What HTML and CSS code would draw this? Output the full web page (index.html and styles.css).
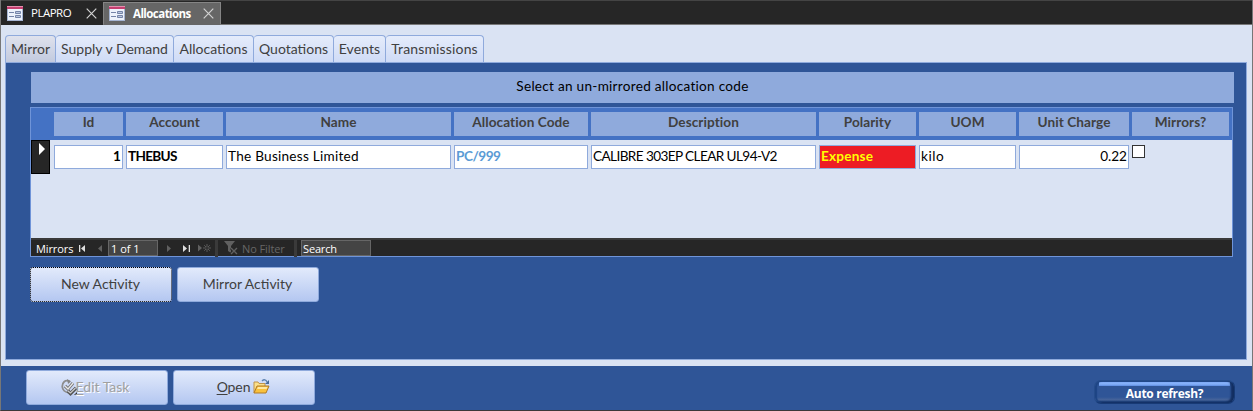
FILE: index.html
```html
<!DOCTYPE html>
<html lang="en">
<head>
<meta charset="utf-8">
<title>Allocations</title>
<link rel="stylesheet" href="styles.css">
</head>
<body>
<svg class="defs" width="0" height="0">
  <symbol id="form" viewBox="0 0 16 15">
    <path d="M0 0h16v15H0z" fill="#a6b5d3"/><path d="M0 0h16v3H0z" fill="#c63f70"/><path d="M0 0h16v1H0z" fill="#e58eae"/>
    <path d="M1 3h14v11H1z" fill="#edf2fb"/><path d="M2 6h5v1H2zM2 10h5v1H2z" fill="#7584a8"/>
    <path d="M8.500 5.500h5v2h-5zM8.500 9.500h5v2h-5z" fill="#b9c6df" stroke="#7584a8"/>
  </symbol>
  <symbol id="close" viewBox="0 0 11 11"><path d="M.7.700l9.600 9.600M10.300.7L.7 10.300" stroke="#d2d2d2" stroke-width="1.200"/></symbol>
</svg>
<div class="window">
  <header class="doc-tabs">
    <div class="doc"><svg class="form-icon"><use href="#form"/></svg><span class="t-plapro">PLAPRO</span><svg class="close"><use href="#close"/></svg></div>
    <div class="doc current"><svg class="form-icon"><use href="#form"/></svg><span class="t-alloc">Allocations</span><svg class="close"><use href="#close"/></svg></div>
    <div class="doc-rest"></div>
  </header>
  <main class="page">
    <nav class="tabs">
      <span class="tab w1 on">Mirror</span><span class="tab w2">Supply v Demand</span><span class="tab w3">Allocations</span><span class="tab w4">Quotations</span><span class="tab w5">Events</span><span class="tab w6">Transmissions</span>
    </nav>
    <section class="panel">
      <div class="banner"><span>Select an un-mirrored allocation code</span></div>
      <div class="subform">
        <div class="cols head"><i></i><b>Id</b><b>Account</b><b>Name</b><b>Allocation Code</b><b>Description</b><b>Polarity</b><b>UOM</b><b>Unit Charge</b><b>Mirrors?</b></div>
        <div class="cols row">
          <div class="selector"><svg width="6" height="12" viewBox="0 0 6 12"><path d="M0 0l6 6-6 6z" fill="#fff"/></svg></div>
          <span class="cell right bold">1</span><span class="cell bold acct">THEBUS</span><span class="cell name">The Business Limited</span><span class="cell bold code">PC/999</span><span class="cell desc">CALIBRE 303EP CLEAR UL94-V2</span><span class="cell bold expense">Expense</span><span class="cell uom">kilo</span><span class="cell right">0.22</span><span class="check"></span>
        </div>
        <div class="blank"></div>
        <div class="nav">
          <span class="nav-title">Mirrors</span>
          <svg class="first" width="7" height="7" viewBox="0 0 7 7"><path d="M0 0h1.300v7H0zM6 0v7L2 3.500z" fill="#e0e0e0"/></svg>
          <svg class="prev" width="5" height="7" viewBox="0 0 5 7"><path d="M4 0v7L0 3.500z" fill="#606060"/></svg>
          <span class="pos">1 of 1</span>
          <svg class="next" width="5" height="7" viewBox="0 0 5 7"><path d="M0 0v7l4-3.500z" fill="#606060"/></svg>
          <svg class="last" width="7" height="7" viewBox="0 0 7 7"><path d="M5.700 0H7v7H5.700zM0 0v7l4-3.500z" fill="#e0e0e0"/></svg>
          <svg class="new" width="13" height="8" viewBox="0 0 13 8"><path d="M0 .5v7L4 4z" fill="#606060"/><path d="M9 0v8M5 4h8M6.200 1.200l5.600 5.600M11.800 1.200L6.200 6.800" stroke="#606060" stroke-width=".9"/><circle cx="9" cy="4" r="1" fill="#262626"/></svg>
          <span class="filter"><svg width="15" height="14" viewBox="0 0 15 14"><path d="M0 0h11L7 5v7l-3-2V5z" fill="#606060"/><path d="M7 7l6 6M13 7l-6 6" stroke="#262626" stroke-width="3"/><path d="M7 7l6 6M13 7l-6 6" stroke="#606060" stroke-width="1.400"/></svg>No Filter</span>
          <span class="search">Search</span>
        </div>
      </div>
      <div class="buttons"><button class="btn focus"><span>New Activity</span></button><button class="btn"><span>Mirror Activity</span></button></div>
    </section>
  </main>
  <footer class="footer">
    <button class="btn edit"><svg width="17" height="17" viewBox="0 0 17 17"><path d="M9 2.500C4-.2 1 4 1.300 8c.4 3 3 5 6 5.500" fill="none" stroke="#8d8d8d" stroke-width="1.800"/><path d="M6 0l4 2.500L7 5z" fill="#858585"/><path d="M4 7l3 3 5-6" fill="none" stroke="#777" stroke-width="3.200"/><path d="M4 7l3 3 5-6" fill="none" stroke="#e8e8e8" stroke-width="1.300"/><path d="M7 12l2.500 2.500L15 9" fill="none" stroke="#555" stroke-width="3.400"/><path d="M7 12l2.500 2L14.500 9" fill="none" stroke="#ccc" stroke-width="1.300"/><path d="M13 16l3-3v3z" fill="#333"/></svg><span><u>E</u>dit Task</span></button>
    <button class="btn open"><span><u>O</u>pen</span><svg width="17" height="15" viewBox="0 0 17 15"><path d="M1 3h4l1 1.500h6v3H5l-4 6z" fill="#fbe08a" stroke="#c0934a"/><path d="M1 14l3-7h12l-3 7z" fill="#f9c13c" stroke="#b07a28"/><path d="M5 8h9.500l-1 2H4z" fill="#ffe9a4"/><path d="M9 2c2-2 4-1.500 5 1" fill="none" stroke="#5e83b1" stroke-width="1.300"/><path d="M16 1v4h-4z" fill="#456b9b"/></svg></button>
    <button class="refresh"><span>Auto refresh?</span></button>
  </footer>
</div>
</body>
</html>
```

FILE: styles.css
```css
* { box-sizing: border-box; }
body { margin: 0; width: 1253px; height: 411px; overflow: hidden; font: 13.600px/18px Lato, "Open Sans", sans-serif; color: #404040; }
svg { display: block; flex: none; }
.defs { position: absolute; }
span { white-space: nowrap; }
.window { height: 411px; display: flex; flex-direction: column; border: solid #777; border-width: 0 1px; background: #2f5597; border-bottom: 1px solid #3b3838; }
.doc-tabs { display: flex; height: 25px; padding: 1px 0 0 1px; background: #262626; border-top: 1px solid #444; color: #fff; font: 11.500px/22px "Open Sans", sans-serif; }
.doc { width: 101px; padding-left: 5px; display: flex; align-items: center; border-bottom: 1px solid #262626; }
.doc.current { width: 118px; background: #666; border: 1px solid #858585; border-bottom-color: #666; font-weight: 700; }
.form-icon { width: 16px; height: 15px; margin-right: 8px; }
.close { width: 11px; height: 11px; margin-left: auto; margin-right: 6px; }
.t-plapro { letter-spacing: -.5px; }
.t-alloc { letter-spacing: -.55px; }
.doc-rest { flex: 1; border-bottom: 1px solid #777; }
.page { height: 341px; background: #dae3f3; padding: 10px 5px 6px 4px; display: flex; flex-direction: column; }
.tabs { display: flex; height: 27px; font-size: 14px; }
.tab { border: 1px solid #8faadc; border-bottom: 0; border-left: 0; border-radius: 4px 4px 0 0; text-align: center; line-height: 26px; background: linear-gradient(#e5ecfb, #cfdbf6); }
.tab.on { border-left: 1px solid #8faadc; background: linear-gradient(#dfe2ed, #c2cadf); }
.w1 { width: 51px; } .w2 { width: 118px; } .w3 { width: 80px; } .w4 { width: 80px; } .w5 { width: 52px; } .w6 { width: 98px; }
.w5 { letter-spacing: .1px; }
.w6 { letter-spacing: .15px; }
.panel { flex: 1; background: #2f5597; border: 1px solid #8faadc; padding: 9px 12px 0 24px; }
.banner { height: 31px; margin-left: 1px; margin-bottom: 4px; width: 1203px; background: #8faadc; color: #000; text-align: center; line-height: 29px; letter-spacing: .27px; }
.subform { width: 1203px; height: 150px; border: 1px solid #6f94d8; background: #dae3f3; display: flex; flex-direction: column; }
.cols { display: grid; grid-template-columns: 20px 69px 97px 225px 134px 225px 97px 97px 110px 97px; column-gap: 3px; }
.head { height: 32px; padding: 4px 0; background: #4472c4; }
.head b { background: #8faadc; text-align: center; line-height: 21px; letter-spacing: .07px; }
.row { height: 34px; color: #000; }
.selector { width: 19px; background: #262626; border: 1px solid #000; padding: 2px 0 0 7px; }
.cell { height: 24px; margin-top: 5px; background: #fff; border: 1px solid #8faadc; padding: 0 1px; line-height: 20px; }
.right { text-align: right; }
.bold { font-weight: 700; }
.acct { letter-spacing: -.7px; }
.name { letter-spacing: .25px; }
.code { color: #5b9bd5; letter-spacing: -.5px; }
.desc { letter-spacing: -.6px; }
.expense { background: #ed1c24; color: #ff0; letter-spacing: .2px; }
.uom { letter-spacing: .5px; }
.check { width: 13px; height: 13px; margin-top: 5px; background: #fff; border: 1px solid #333; }
.blank { flex: 1; }
.nav { height: 18px; background: #262626; border-top: 2px solid #3a3a3a; color: #fff; display: flex; align-items: center; font: 11px/16px "Open Sans", sans-serif; padding-left: 5px; }
.nav-title { width: 43px; letter-spacing: -.1px; }
.nav span { padding-top: 1px; }
.prev { margin-left: 12px; }
.nav .pos { width: 50px; height: 16px; margin-left: 5px; padding-left: 2px; background: #444; border: 1px solid #666; line-height: 14px; }
.next { margin-left: 9px; }
.last { margin-left: 11px; }
.new { margin-left: 8px; }
.filter { display: flex; gap: 3px; width: 82px; margin-left: 4px; padding-left: 6px; border: solid #3a3a3a; border-width: 0 3px; color: #666; letter-spacing: -.1px; }
.nav .search { width: 70px; height: 16px; margin-left: 4px; padding-left: 1px; background: #444; border: 1px solid #666; line-height: 14px; letter-spacing: -.15px; }
.buttons { display: flex; gap: 5px; margin-top: 10px; }
.btn { width: 142px; height: 35px; padding: 0 1px 2px 0; border: 1px solid #8faadc; border-radius: 3px; background: linear-gradient(#e2eafb, #b4c7f1); font: inherit; font-size: 14px; color: #404040; display: flex; justify-content: center; align-items: center; }
.focus { border: 1px dotted #000; }
.footer { flex: 1; display: flex; gap: 5px; padding: 4px 17px 0 25px; }
.edit { color: #a0a0a0; text-shadow: 1px 1px #fff; padding-right: 4px; }
.edit span { margin-left: -2px; }
.edit svg { margin-top: 2px; }
.open { gap: 3px; letter-spacing: -.1px; }
u { text-underline-offset: 2px; }
.refresh { width: 141px; height: 24px; margin: 10px 0 0 auto; border: 1px solid #173a75; border-left-color: #254c8b; border-top-color: #254c8b; border-radius: 7px; background: linear-gradient(#7faaf5, #86b2fa 2px, #5d8cdf) 4px 1px / 131px 4px no-repeat, linear-gradient(#244b8c, #2f5597 5px 16px, #48659a 19px, #183c78 21px); box-shadow: inset 2px 0 1px #1d4484, inset -3px -1px 2px #122e60; padding: 3px 0 0; color: #fff; font: 700 12px/18px "Open Sans", sans-serif; letter-spacing: -.3px; }
```
